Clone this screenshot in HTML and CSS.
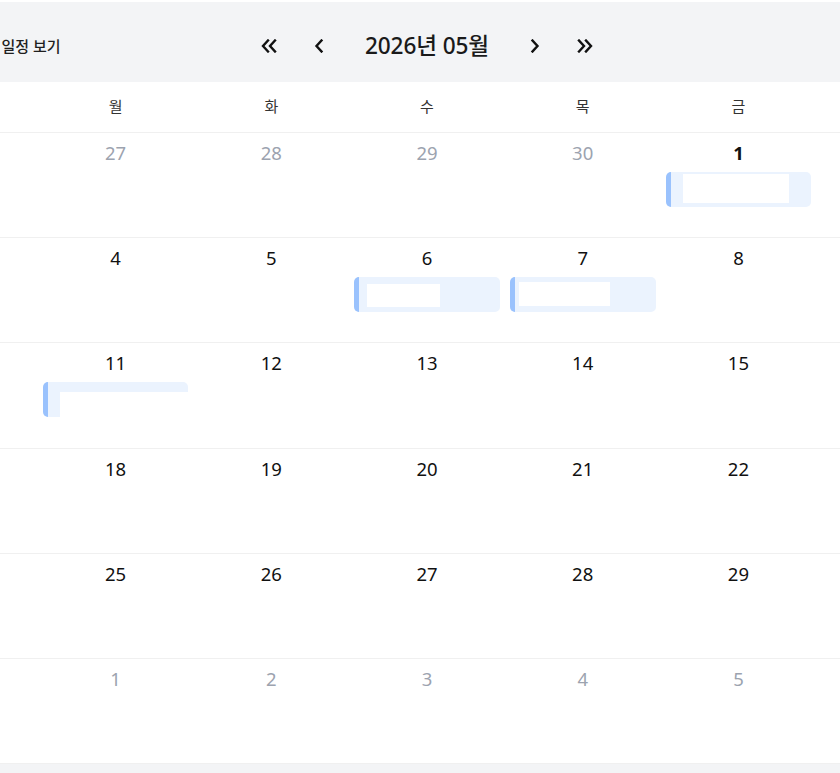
FILE: index.html
```html
<!DOCTYPE html>
<html lang="ko">
<head>
<meta charset="utf-8">
<title>2026년 05월</title>
<link rel="stylesheet" href="styles.css">
</head>
<body>
<div class="page">
  <div class="calendar">
    <header class="toolbar">
      <div class="toolbar-left"><span class="view-link">전체 일정 보기</span></div>
      <nav class="nav">
        <button class="nav-btn" aria-label="이전 해">
          <svg viewBox="0 0 18 14" width="18" height="14"><path d="M8 1.5 3 7l5 5.5M15 1.5 10 7l5 5.5" fill="none" stroke="#111" stroke-width="2.4" stroke-linecap="square"/></svg>
        </button>
        <button class="nav-btn" aria-label="이전 달">
          <svg viewBox="0 0 12 14" width="12" height="14"><path d="M8.5 1.5 3.5 7l5 5.5" fill="none" stroke="#111" stroke-width="2.4" stroke-linecap="square"/></svg>
        </button>
        <h1 class="title">2026년 05월</h1>
        <button class="nav-btn" aria-label="다음 달">
          <svg viewBox="0 0 12 14" width="12" height="14"><path d="M3.5 1.5 8.5 7l-5 5.5" fill="none" stroke="#111" stroke-width="2.4" stroke-linecap="square"/></svg>
        </button>
        <button class="nav-btn" aria-label="다음 해">
          <svg viewBox="0 0 18 14" width="18" height="14"><path d="M3 1.5 8 7l-5 5.5M10 1.5 15 7l-5 5.5" fill="none" stroke="#111" stroke-width="2.4" stroke-linecap="square"/></svg>
        </button>
      </nav>
      <div class="toolbar-right"></div>
    </header>

    <div class="weekdays">
      <div>일</div><div>월</div><div>화</div><div>수</div><div>목</div><div>금</div><div>토</div>
    </div>

    <div class="weeks">
      <div class="week">
        <div class="day other"><span class="num">26</span></div>
        <div class="day other"><span class="num">27</span></div>
        <div class="day other"><span class="num">28</span></div>
        <div class="day other"><span class="num">29</span></div>
        <div class="day other"><span class="num">30</span></div>
        <div class="day"><span class="num strong">1</span><div class="event"><span class="redact r1"></span></div></div>
        <div class="day"><span class="num">2</span></div>
      </div>
      <div class="week">
        <div class="day"><span class="num">3</span></div>
        <div class="day"><span class="num">4</span></div>
        <div class="day"><span class="num">5</span></div>
        <div class="day"><span class="num">6</span><div class="event"><span class="redact r6"></span></div></div>
        <div class="day"><span class="num">7</span><div class="event"><span class="redact r7"></span></div></div>
        <div class="day"><span class="num">8</span></div>
        <div class="day"><span class="num">9</span></div>
      </div>
      <div class="week">
        <div class="day"><span class="num">10</span></div>
        <div class="day"><span class="num">11</span><div class="event"><span class="redact r11"></span></div></div>
        <div class="day"><span class="num">12</span></div>
        <div class="day"><span class="num">13</span></div>
        <div class="day"><span class="num">14</span></div>
        <div class="day"><span class="num">15</span></div>
        <div class="day"><span class="num">16</span></div>
      </div>
      <div class="week">
        <div class="day"><span class="num">17</span></div>
        <div class="day"><span class="num">18</span></div>
        <div class="day"><span class="num">19</span></div>
        <div class="day"><span class="num">20</span></div>
        <div class="day"><span class="num">21</span></div>
        <div class="day"><span class="num">22</span></div>
        <div class="day"><span class="num">23</span></div>
      </div>
      <div class="week">
        <div class="day"><span class="num">24</span></div>
        <div class="day"><span class="num">25</span></div>
        <div class="day"><span class="num">26</span></div>
        <div class="day"><span class="num">27</span></div>
        <div class="day"><span class="num">28</span></div>
        <div class="day"><span class="num">29</span></div>
        <div class="day"><span class="num">30</span></div>
      </div>
      <div class="week">
        <div class="day"><span class="num">31</span></div>
        <div class="day other"><span class="num">1</span></div>
        <div class="day other"><span class="num">2</span></div>
        <div class="day other"><span class="num">3</span></div>
        <div class="day other"><span class="num">4</span></div>
        <div class="day other"><span class="num">5</span></div>
        <div class="day other"><span class="num">6</span></div>
      </div>
    </div>
  </div>
  <div class="footer"></div>
</div>
</body>
</html>
```

FILE: styles.css
```css
html, body {
  margin: 0;
  padding: 0;
  background: #ffffff;
  overflow: hidden;
}

body {
  font-family: "Noto Sans", "Noto Sans CJK KR", sans-serif;
  color: #111111;
}

.page {
  width: 840px;
  height: 773px;
  padding-top: 2px;
  box-sizing: border-box;
  overflow: hidden;
  display: flex;
  flex-direction: column;
}

.calendar {
  width: 1090px;
  margin-left: -118px;
  flex: none;
}

.toolbar {
  height: 80px;
  padding-top: 8px;
  box-sizing: border-box;
  background: #f3f4f6;
  display: grid;
  grid-template-columns: 1fr auto 1fr;
  align-items: center;
}

.toolbar-left {
  padding-left: 88px;
}

.view-link {
  font-family: "Noto Sans CJK KR", sans-serif;
  font-size: 15px;
  font-weight: 500;
  color: #1f1f1f;
  letter-spacing: -0.1px;
}

.nav {
  display: flex;
  align-items: center;
}

.nav-btn {
  width: 24px;
  height: 30px;
  padding: 0;
  border: 0;
  background: transparent;
  display: flex;
  align-items: center;
  justify-content: center;
  margin: 0 13px;
}

.title {
  margin: 0 21px;
  font-size: 22.6px;
  font-weight: 500;
  color: #1a1a1a;
  letter-spacing: -0.1px;
  line-height: 30px;
}

.weekdays {
  display: grid;
  grid-template-columns: repeat(7, 1fr);
  height: 51px;
  border-bottom: 1px solid #f0f0f0;
  box-sizing: border-box;
}

.weekdays div {
  display: flex;
  align-items: center;
  justify-content: center;
  font-family: "Noto Sans CJK KR", sans-serif;
  font-size: 15px;
  color: #333333;
  padding-bottom: 3px;
}

.week {
  display: grid;
  grid-template-columns: repeat(7, 1fr);
  height: 105.2px;
  border-bottom: 1px solid #f0f0f0;
  box-sizing: border-box;
}

.day {
  display: flex;
  flex-direction: column;
  align-items: center;
  padding-top: 8px;
}

.num {
  font-size: 18.5px;
  line-height: 24px;
  color: #111111;
}

.num.strong {
  font-weight: 700;
}

.other .num {
  color: #9ca3af;
}

.event {
  align-self: stretch;
  margin: 7px 5px 0;
  height: 35px;
  background: #ebf3fe;
  border-left: 5px solid #9ac2fd;
  border-radius: 5px;
  box-sizing: border-box;
  display: flex;
  align-items: flex-start;
}

.redact {
  display: block;
  background: #ffffff;
}

.r1 { margin: 2px 0 0 12px; width: 106px; height: 29px; }
.r6 { margin: 7px 0 0 8px; width: 73px; height: 23px; }
.r7 { margin: 5px 0 0 4px; width: 91px; height: 24px; }
.r11 { margin: 10px -1px 0 12px; flex: 1; height: 26px; }

.footer {
  flex: 1;
  background: #f3f4f6;
}
```
